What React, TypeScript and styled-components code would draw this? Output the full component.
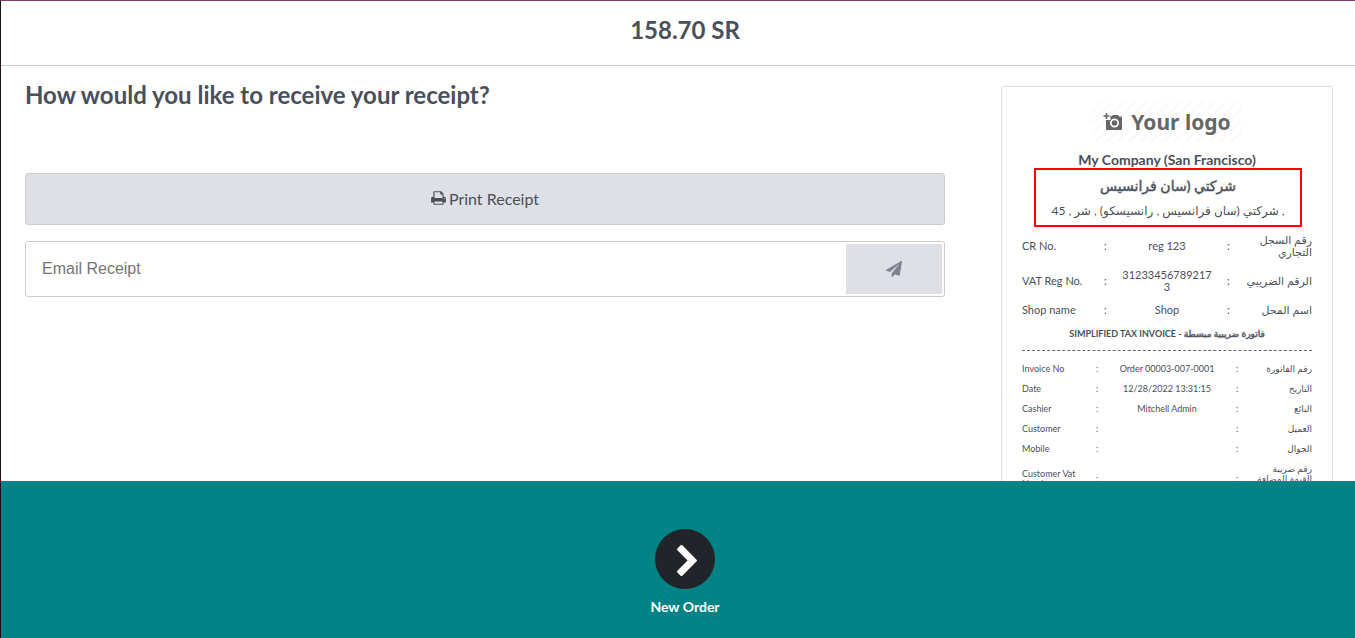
import React from "react";
import styled, { createGlobalStyle } from "styled-components";

const GlobalStyle = createGlobalStyle`
  *, *::before, *::after { box-sizing: border-box; }
  body {
    margin: 0;
    background: #fff;
    color: #4a4f59;
    font-family: Lato, "DejaVu Sans", sans-serif;
    font-size: 16px;
  }
`;

const Screen = styled.div`
  display: flex;
  flex-direction: column;
  height: 100vh;
  overflow: hidden;
  border-left: 1px solid #1f0f1c;
  border-top: 1px solid #7c3f68;
`;

const TopBar = styled.header`
  flex: none;
  display: flex;
  justify-content: center;
  padding: 14px 0 20px 14px;
  border-bottom: 1px solid #ccc;
`;

const Total = styled.h1`
  margin: 0;
  font-size: 24px;
  line-height: 30px;
  font-weight: 700;
`;

const Content = styled.main`
  flex: 1;
  min-height: 0;
  display: flex;
  gap: 56px;
  padding: 0 22px 0 24px;
  overflow: hidden;
`;

const Options = styled.section`
  flex: 1;
  min-width: 0;
`;

const Question = styled.h2`
  margin: 14px 0 63px;
  font-size: 24px;
  line-height: 30px;
  font-weight: 700;
`;

const PrintButton = styled.button`
  display: flex;
  align-items: center;
  justify-content: center;
  gap: 3px;
  width: 100%;
  height: 52px;
  padding: 0 0 2px;
  border: 1px solid #ccc;
  border-radius: 3px;
  background: #dfe0e6;
  color: inherit;
  font: inherit;
`;

const EmailForm = styled.form`
  display: flex;
  height: 56px;
  margin-top: 16px;
  padding: 2px;
  border: 1px solid #ccc;
  border-radius: 3px;
`;

const EmailInput = styled.input`
  flex: 1;
  min-width: 0;
  padding: 0 14px;
  border: 0;
  outline: 0;
  background: transparent;
  color: inherit;
  font: 16px "Liberation Sans", sans-serif;
  &::placeholder { color: #757575; }
`;

const SendButton = styled.button`
  display: flex;
  align-items: center;
  justify-content: center;
  width: 96px;
  padding: 0;
  border: 0;
  background: #dfe0e6;
  color: #808291;
`;

const Receipt = styled.aside`
  flex: none;
  align-self: flex-start;
  width: 332px;
  margin-top: 20px;
  padding: 15px 20px 20px;
  border: 1px solid #dcdcdc;
  border-radius: 3px;
  text-align: center;
`;

const Logo = styled.div`
  display: flex;
  align-items: center;
  justify-content: center;
  gap: 8px;
  width: 150px;
  height: 40px;
  margin: 0 auto;
  background: repeating-linear-gradient(135deg, #fff 0 5px, #fafafa 5px 8px);
  color: #666;
  font-family: "Noto Sans", Lato, sans-serif;
  font-size: 21px;
  line-height: 28px;
  font-weight: 700;
`;

const Company = styled.div`
  margin-top: 9px;
  font-size: 14px;
  line-height: 17px;
  font-weight: 700;
`;

const ArabicCompany = styled.div`
  margin: 0 10px 1px 12px;
  padding: 6px 0 4px;
  border: 2px solid #f00;
  line-height: 20px;
`;

const ArabicBold = styled.bdi`
  font-weight: 400;
  -webkit-text-stroke: 1px rgba(74, 79, 89, 0.45);
`;

const ArabicName = styled.div`
  margin-bottom: 5px;
  font-size: 14px;
`;

const ArabicAddress = styled.div`
  font-size: 12px;
`;

const Details = styled.table<{ $small?: boolean }>`
  width: 100%;
  table-layout: fixed;
  border-collapse: collapse;
  font-size: ${(p) => (p.$small ? 9 : 11)}px;
  line-height: ${(p) => (p.$small ? 10 : 12)}px;
  th, td {
    padding: ${(p) => (p.$small ? "5px 0" : "6px 0 5px")};
    font-weight: 400;
    overflow-wrap: anywhere;
  }
  td:nth-child(3) {
    padding-left: 4px;
    padding-right: 4px;
  }
  td:last-child {
    padding-left: ${(p) => (p.$small ? 6 : 0)}px;
    text-align: right;
  }
`;

const LabelCol = styled.col<{ $small?: boolean }>`
  width: ${(p) => (p.$small ? 65 : 72)}px;
`;

const ColonCol = styled.col<{ $small?: boolean }>`
  width: ${(p) => (p.$small ? 20 : 23)}px;
`;

const Label = styled.th`
  text-align: left;
`;

const InvoiceTitle = styled.div`
  margin: 7px 0 8px;
  padding-bottom: 10px;
  border-bottom: 1px dashed #666;
  font-size: 9px;
  line-height: 12px;
  font-weight: 700;
`;

const BottomBar = styled.footer`
  flex: none;
  display: flex;
  justify-content: center;
  padding: 48px 0 22px 14px;
  background: #018286;
`;

const NewOrder = styled.button`
  display: flex;
  flex-direction: column;
  align-items: center;
  gap: 8px;
  padding: 0;
  border: 0;
  background: none;
  color: #fff;
  font: inherit;
  font-size: 14px;
  line-height: 19px;
  font-weight: 700;
`;

const Circle = styled.span`
  display: flex;
  align-items: center;
  justify-content: center;
  width: 60px;
  height: 60px;
  padding: 2px 0 0 5px;
  border-radius: 50%;
  background: #212529;
`;

const PrintIcon = () => (
  <svg width="15" height="16" viewBox="0 0 1664 1792" fill="currentColor" aria-hidden="true">
    <path d="M384 1536h896v-256h-896v256zM384 896h896v-384h-160q-40 0-68-28t-28-68v-160h-640v640zM1536 960q0-26-19-45t-45-19-45 19-19 45 19 45 45 19 45-19 19-45zM1664 960v416q0 13-9.5 22.5t-22.5 9.5h-224v160q0 40-28 68t-68 28h-960q-40 0-68-28t-28-68v-160h-224q-13 0-22.5-9.5t-9.5-22.5v-416q0-79 56.5-135.5t135.5-56.5h64v-544q0-40 28-68t68-28h672q40 0 88 20t76 48l152 152q28 28 48 76t20 88v256h64q79 0 135.5 56.5t56.5 135.5z" />
  </svg>
);

const PlaneIcon = () => (
  <svg width="16" height="16" viewBox="0 0 1792 1792" fill="currentColor" aria-hidden="true">
    <path d="M1764 11q33 24 27 64l-256 1536q-5 29-32 45-14 8-31 8-11 0-24-5l-453-185-242 295q-18 23-49 23-13 0-22-4-19-7-30.5-23.5t-11.5-36.5v-349l864-1059-1069 925-395-162q-37-14-40-55-2-40 32-59l1664-960q15-9 32-9 20 0 36 11z" />
  </svg>
);

const ChevronIcon = () => (
  <svg width="20" height="31" viewBox="90 -192 1036 1612" fill="currentColor" aria-hidden="true">
    <path d="M1107 659l-742 742q-19 19-45 19t-45-19l-166-166q-19-19-19-45t19-45l531-531-531-531q-19-19-19-45t19-45l166-166q19-19 45-19t45 19l742 742q19 19 19 45t-19 45z" />
  </svg>
);

const CameraIcon = () => (
  <svg width="20" height="20" viewBox="0 0 20 20" fill="none" aria-hidden="true">
    <path
      fill="currentColor"
      fillRule="evenodd"
      d="M7.500 4H9l1-1h5l1 1.500h2q1 0 1 1V17q0 1-1 1H4q-1 0-1-1V8h4.500zM11.500 6.500a4.500 4.500 0 1 0 0 9 4.500 4.500 0 0 0 0-9zM11.500 8.200a2.800 2.800 0 1 1 0 5.600 2.800 2.800 0 0 1 0-5.600z"
    />
    <path stroke="currentColor" strokeWidth="1.600" d="M3.500 1v6M.5 4h6" />
  </svg>
);

type Row = [label: string, value: string, arabic: string];

const shopRows: Row[] = [
  ["CR No.", "reg 123", "رقم السجل التجاري"],
  ["VAT Reg No.", "312334567892173", "الرقم الضريبي"],
  ["Shop name", "Shop", "اسم المحل"],
];

const invoiceRows: Row[] = [
  ["Invoice No", "Order 00003-007-0001", "رقم الفاتورة"],
  ["Date", "12/28/2022 13:31:15", "التاريخ"],
  ["Cashier", "Mitchell Admin", "البائع"],
  ["Customer", "", "العميل"],
  ["Mobile", "", "الجوال"],
  ["Customer Vat Number", "", "رقم ضريبة القيمة المضافة للعميل"],
];

const DetailTable = ({ rows, small }: { rows: Row[]; small?: boolean }) => (
  <Details $small={small}>
    <colgroup>
      <LabelCol $small={small} />
      <ColonCol $small={small} />
      <col />
      <ColonCol $small={small} />
      <LabelCol $small={small} />
    </colgroup>
    <tbody>
      {rows.map(([label, value, arabic]) => (
        <tr key={label}>
          <Label scope="row">{label}</Label>
          <td>:</td>
          <td>{value}</td>
          <td>:</td>
          <td lang="ar">{arabic}</td>
        </tr>
      ))}
    </tbody>
  </Details>
);

export default function App() {
  return (
    <Screen>
      <GlobalStyle />
      <TopBar>
        <Total>158.70 SR</Total>
      </TopBar>
      <Content>
        <Options>
          <Question>How would you like to receive your receipt?</Question>
          <PrintButton type="button">
            <PrintIcon />
            Print Receipt
          </PrintButton>
          <EmailForm onSubmit={(e) => e.preventDefault()}>
            <EmailInput type="email" placeholder="Email Receipt" aria-label="Email Receipt" />
            <SendButton type="submit" aria-label="Send">
              <PlaneIcon />
            </SendButton>
          </EmailForm>
        </Options>
        <Receipt>
          <Logo>
            <CameraIcon />
            Your logo
          </Logo>
          <Company>My Company (San Francisco)</Company>
          <ArabicCompany dir="rtl" lang="ar">
            <ArabicName>
              <ArabicBold>شركتي (سان فرانسيس</ArabicBold>
            </ArabicName>
            <ArabicAddress>, شركتي (سان فرانسيس , رانسيسكو) , شر , 45</ArabicAddress>
          </ArabicCompany>
          <DetailTable rows={shopRows} />
          <InvoiceTitle>
            SIMPLIFIED TAX INVOICE - <ArabicBold lang="ar">فاتورة ضريبية مبسطة</ArabicBold>
          </InvoiceTitle>
          <DetailTable rows={invoiceRows} small />
        </Receipt>
      </Content>
      <BottomBar>
        <NewOrder type="button">
          <Circle>
            <ChevronIcon />
          </Circle>
          New Order
        </NewOrder>
      </BottomBar>
    </Screen>
  );
}
